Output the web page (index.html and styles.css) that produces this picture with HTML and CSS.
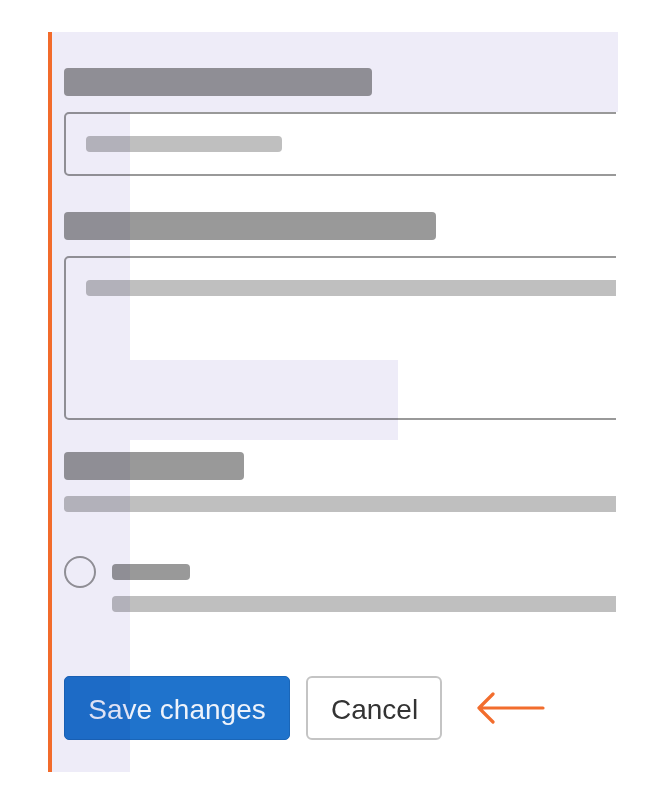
FILE: index.html
```html
<!DOCTYPE html>
<html lang="en">
<head>
<meta charset="utf-8">
<title>Form layout</title>
<link rel="stylesheet" href="styles.css">
</head>
<body>
<div class="stage">
  <div class="frame">
    <div class="clip">
      <div class="field">
        <div class="sk sk-title w308"></div>
        <div class="input"><div class="sk sk-text w196"></div></div>
      </div>
      <div class="field">
        <div class="sk sk-title w372"></div>
        <div class="textarea"><div class="sk sk-text wfull"></div></div>
      </div>
      <div class="field field-radio">
        <div class="sk sk-title w180"></div>
        <div class="sk sk-text wfull"></div>
        <div class="radio-row">
          <div class="radio"></div>
          <div class="radio-body">
            <div class="sk sk-title-sm w78"></div>
            <div class="sk sk-text wfull"></div>
          </div>
        </div>
      </div>
      <div class="actions">
        <button class="btn btn-primary" type="button">Save changes</button>
        <button class="btn btn-secondary" type="button">Cancel</button>
        <svg class="arrow" width="70" height="32" viewBox="0 0 70 32" aria-hidden="true">
          <path d="M3 16 H67 M17 2 L3 16 L17 30" fill="none" stroke="#f26d2d" stroke-width="3.2" stroke-linecap="round" stroke-linejoin="round"/>
        </svg>
      </div>
    </div>
  </div>
  <div class="overlay ov-top"></div>
  <div class="overlay ov-left"></div>
  <div class="overlay ov-box"></div>
</div>
</body>
</html>
```
FILE: styles.css
```css
* { box-sizing: border-box; }
html, body { margin: 0; padding: 0; background: #fff; }
body { font-family: "Liberation Sans", Arial, sans-serif; }

.stage {
  position: relative;
  width: 664px;
  height: 804px;
  padding: 32px 0 0 48px;
}

.frame {
  width: 568px;
  height: 740px;
  border-left: 4px solid #f26b2b;
  padding: 36px 0 32px 12px;
}

.clip {
  width: 552px;
  overflow: hidden;
  display: flex;
  flex-direction: column;
}

.sk { border-radius: 4px; }
.sk-title { height: 28px; background: #999; }
.sk-title-sm { height: 16px; background: #999; }
.sk-text { height: 16px; background: #bfbfbf; }
.w308 { width: 308px; }
.w372 { width: 372px; }
.w180 { width: 180px; }
.w196 { width: 196px; }
.w78 { width: 78px; }
.wfull { width: 640px; }

.field { display: flex; flex-direction: column; gap: 16px; }
.field + .field { margin-top: 36px; }
.field-radio { margin-top: 32px !important; gap: 16px; }

.input, .textarea {
  width: 640px;
  border: 2px solid #999;
  border-radius: 5px;
  padding: 22px 20px;
}
.input { height: 64px; }
.textarea { height: 164px; }

.radio-row {
  display: flex;
  gap: 16px;
  margin-top: 28px;
}
.radio {
  width: 32px;
  height: 32px;
  border: 2px solid #999;
  border-radius: 50%;
  flex: none;
}
.radio-body {
  display: flex;
  flex-direction: column;
  gap: 16px;
  padding-top: 8px;
}

.actions {
  display: flex;
  align-items: center;
  gap: 16px;
  margin-top: 64px;
}
.btn {
  height: 64px;
  font-family: "Liberation Sans", Arial, sans-serif;
  font-size: 28px;
  border-radius: 5px;
  padding: 3px 23px 0;
  line-height: 1;
}
.btn-primary {
  background: #1f73cc;
  color: #eef3fb;
  border: 1px solid #1a66b8;
  width: 226px;
}
.btn-secondary {
  background: #fff;
  color: #333;
  border: 2px solid #c4c4c4;
  width: 136px;
  border-radius: 6px;
}
.arrow { margin-left: 18px; flex: none; }

.overlay {
  position: absolute;
  background: #eeecf8;
  mix-blend-mode: multiply;
  pointer-events: none;
}
.ov-top { left: 52px; top: 32px; width: 566px; height: 80px; }
.ov-left { left: 52px; top: 112px; width: 78px; height: 660px; }
.ov-box { left: 130px; top: 360px; width: 268px; height: 80px; }
```
